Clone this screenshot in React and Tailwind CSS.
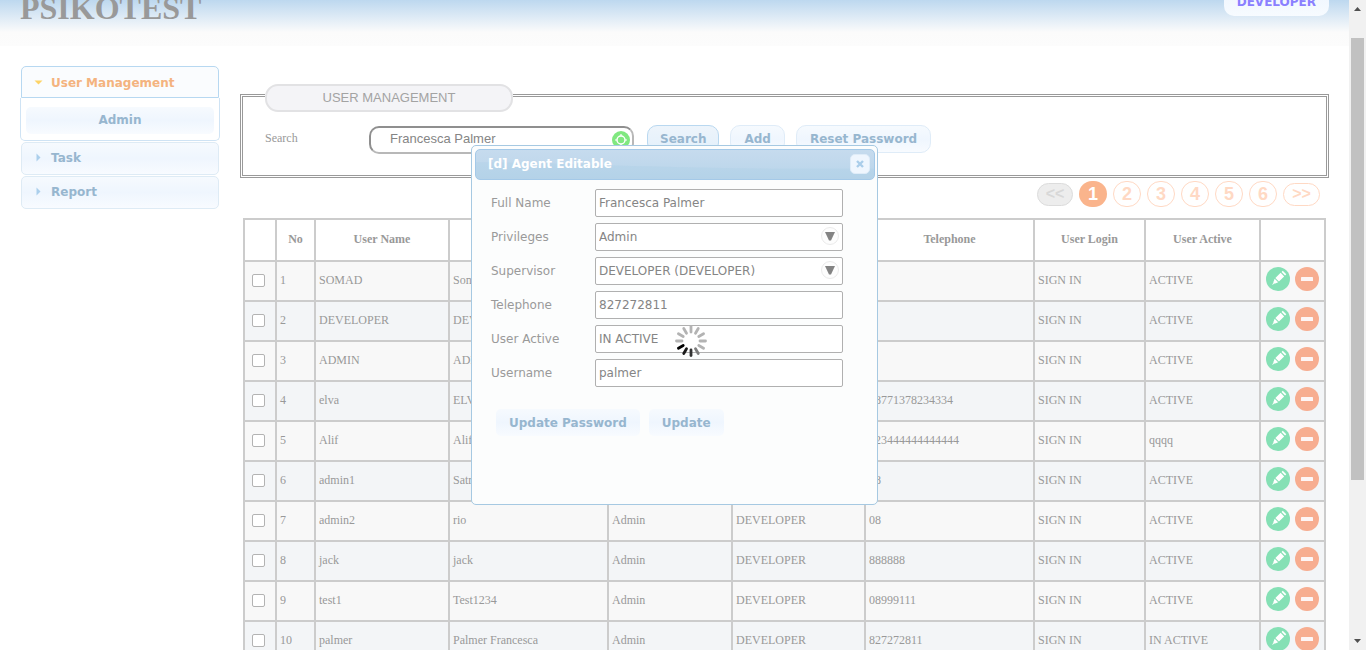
import React from "react";

const users = [
  { no: 1, user: "SOMAD", name: "Somad", phone: "", active: "ACTIVE" },
  { no: 2, user: "DEVELOPER", name: "DEVELOPER", phone: "", active: "ACTIVE" },
  { no: 3, user: "ADMIN", name: "ADMIN", phone: "", active: "ACTIVE" },
  { no: 4, user: "elva", name: "ELVA", phone: "08771378234334", active: "ACTIVE" },
  { no: 5, user: "Alif", name: "Alif", phone: "023444444444444", active: "qqqq" },
  { no: 6, user: "admin1", name: "Satrio", phone: "08", active: "ACTIVE" },
  { no: 7, user: "admin2", name: "rio", phone: "08", active: "ACTIVE" },
  { no: 8, user: "jack", name: "jack", phone: "888888", active: "ACTIVE" },
  { no: 9, user: "test1", name: "Test1234", phone: "08999111", active: "ACTIVE" },
  { no: 10, user: "palmer", name: "Palmer Francesca", phone: "827272811", active: "IN ACTIVE" },
];

const softFill = "bg-linear-to-b from-[#f6fafe] via-[#eff6fe] to-[#f8fbff]";
const uiBold = "font-['DejaVu_Sans',sans-serif] text-[12px] font-bold text-[#97b6cf]";

function EditIcon() {
  return (
    <svg viewBox="0 0 24 24" className="size-6" aria-hidden="true">
      <circle cx="12" cy="12" r="12" fill="#85e0b5" />
      <g transform="rotate(45 12 12)" fill="#fff">
        <rect x="9.5" y="2.8" width="5" height="1.7" />
        <rect x="9.5" y="5.8" width="5" height="7.4" />
        <path d="M9.500 14.200h5l-1.500 3.600h-2z" />
        <path d="M11.300 18h1.400l-.7 2.400z" />
      </g>
    </svg>
  );
}

function RemoveIcon() {
  return (
    <svg viewBox="0 0 24 24" className="size-6" aria-hidden="true">
      <circle cx="12" cy="12" r="12" fill="#f7ad90" />
      <rect x="6" y="10" width="12" height="4" rx="0.6" fill="#fdf6f6" />
    </svg>
  );
}

function TargetIcon() {
  return (
    <svg viewBox="0 0 18 18" className="size-[18px]" aria-hidden="true">
      <circle cx="9" cy="9" r="9" fill="#80e880" />
      <circle cx="9" cy="9" r="4" fill="none" stroke="#fff" strokeWidth="1.4" />
      <path d="M9 3v2M9 13v2M3 9h2M13 9h2" stroke="#fff" strokeWidth="1.2" />
    </svg>
  );
}

const spokes = [
  "#b3b3b3", "#b3b3b3", "#b3b3b3", "#b3b3b3", "#b3b3b3", "#7d7d7d",
  "#333333", "#1a1a1a", "#000000", "#b3b3b3", "#b3b3b3", "#b3b3b3",
];

function Spinner() {
  return (
    <svg viewBox="0 0 32 32" className="size-8" role="img" aria-label="Loading">
      {spokes.map((color, i) => (
        <line
          key={i}
          x1="16"
          y1="1.5"
          x2="16"
          y2="7"
          stroke={color}
          strokeWidth="2.8"
          strokeLinecap="round"
          transform={`rotate(${i * 30} 16 16)`}
        />
      ))}
    </svg>
  );
}

function Sidebar() {
  const item = `flex h-[33px] w-full items-center gap-[8px] rounded-[5px] border border-[#deebf5] pb-[2px] pl-[12px] ${softFill} ${uiBold}`;
  return (
    <nav className="w-[200px] shrink-0">
      <div className="px-px">
        <button className="flex h-8 w-full items-center gap-[8px] rounded-t-[5px] border border-[#b7d8f1] bg-[#fafcfe] pt-px pl-[12px] font-['DejaVu_Sans',sans-serif] text-[12px] font-bold text-[#f4b37f]">
          <svg viewBox="0 0 9 9" className="size-[9px]" aria-hidden="true">
            <path d="M0.5 2.5h8l-4 4z" fill="#fdd367" />
          </svg>
          User Management
        </button>
      </div>
      <div className="h-[43px] rounded-b-[5px] border border-t-0 border-[#cfe3f4] px-[5px] pt-2">
        <button className={`h-[27px] w-full rounded-[5px] ${softFill} ${uiBold}`}>Admin</button>
      </div>
      <div className="flex flex-col gap-px px-px pt-px">
        {["Task", "Report"].map((label) => (
          <button key={label} className={item}>
            <svg viewBox="0 0 9 9" className="size-[9px]" aria-hidden="true">
              <path d="M2.5 0.5v8l4-4z" fill="#abcfec" />
            </svg>
            {label}
          </button>
        ))}
      </div>
    </nav>
  );
}

function SearchPanel() {
  const button = `h-7 rounded-[10px] border ${uiBold}`;
  return (
    <fieldset className="h-[94px] min-w-0 border-[3px] border-double border-[#999999] pl-[22px]">
      <legend className="h-[22px] px-0">
        <div className="flex h-7 w-[248px] items-center justify-center rounded-[13px] border-2 border-[#e2e2e4] bg-[#f4f4f7] pb-px font-['Liberation_Sans',Arial,sans-serif] text-[13px] text-[#a3a3a3]">
          USER MANAGEMENT
        </div>
      </legend>
      <div className="flex items-center pt-[19px]">
        <label
          htmlFor="search"
          className="w-[104px] shrink-0 pb-[2px] font-['Liberation_Serif',serif] text-[12px] text-[#999999]"
        >
          Search
        </label>
        <div className="relative">
          <input
            id="search"
            defaultValue="Francesca Palmer"
            className="h-7 w-[265px] rounded-[10px] border-2 border-t-[#8f8f8f] border-r-[#b8b8b8] border-b-[#b8b8b8] border-l-[#8f8f8f] bg-white pb-[2px] pl-[19px] font-['Liberation_Sans',Arial,sans-serif] text-[13px] text-[#858585]"
          />
          <span className="absolute top-[6px] right-[4px]">
            <TargetIcon />
          </span>
        </div>
        <button className={`${button} ml-[13px] border-[#b9d8f0] bg-linear-to-b from-[#edf4fb] to-[#e3f0fb] px-3`}>
          Search
        </button>
        <button className={`${button} ml-[11px] border-[#dfecf8] px-[13px] ${softFill}`}>Add</button>
        <button className={`${button} ml-[11px] border-[#dfecf8] px-[13px] ${softFill}`}>Reset Password</button>
      </div>
    </fieldset>
  );
}

function Pager() {
  return (
    <div className="flex h-[26px] items-center justify-end gap-[6px] pr-[9px] font-['Liberation_Sans',Arial,sans-serif] font-bold">
      <button className="flex h-[23px] w-9 items-center justify-center rounded-full border border-[#dcdcdc] bg-[#ededed] text-[16px] text-[#d8d8d8]">
        {"<<"}
      </button>
      {[1, 2, 3, 4, 5, 6].map((page) => (
        <button
          key={page}
          className={
            page === 1
              ? "flex h-[26px] w-7 items-center justify-center rounded-full bg-[#fab48c] text-[18px] text-white"
              : "flex h-[26px] w-7 items-center justify-center rounded-full border border-[#ffd9c4] text-[18px] text-[#ffd9c4]"
          }
        >
          {page}
        </button>
      ))}
      <button className="flex h-[23px] w-[37px] items-center justify-center rounded-full border border-[#ffd9c4] text-[16px] text-[#ffd9c4]">
        {">>"}
      </button>
    </div>
  );
}

function UserTable() {
  const cell = "border-2 border-[#cccccc] pt-0 pr-0 pb-[2px] pl-[3px]";
  const head = "border-2 border-[#cccccc] px-0 pt-0 pb-[2px] font-bold";
  return (
    <table className="w-full table-fixed border-collapse border-2 border-[#c0c0c0] font-['Liberation_Serif',serif] text-[12px] text-[#999999]">
      <colgroup>
        <col className="w-[32px]" />
        <col className="w-[39px]" />
        <col className="w-[134px]" />
        <col className="w-[159px]" />
        <col className="w-[124px]" />
        <col className="w-[133px]" />
        <col className="w-[169px]" />
        <col className="w-[111px]" />
        <col className="w-[115px]" />
        <col className="w-[65px]" />
      </colgroup>
      <thead>
        <tr className="h-[42px]">
          <th className={head}></th>
          <th className={head}>No</th>
          <th className={head}>User Name</th>
          <th className={head}></th>
          <th className={head}></th>
          <th className={head}></th>
          <th className={head}>Telephone</th>
          <th className={head}>User Login</th>
          <th className={head}>User Active</th>
          <th className={head}></th>
        </tr>
      </thead>
      <tbody>
        {users.map((u) => (
          <tr key={u.no} className="h-10 odd:bg-[#f8f8f8] even:bg-[#f3f5f7]">
            <td className="border-2 border-[#cccccc] pt-0 pr-[3px] pb-[2px] pl-0">
              <input
                type="checkbox"
                aria-label={`Select ${u.user}`}
                className="mx-auto block size-[13px] appearance-none rounded-[2px] border border-[#b3b3b3] bg-white"
              />
            </td>
            <td className={cell}>{u.no}</td>
            <td className={cell}>{u.user}</td>
            <td className={cell}>{u.name}</td>
            <td className={cell}>Admin</td>
            <td className={cell}>DEVELOPER</td>
            <td className={cell}>{u.phone}</td>
            <td className={cell}>SIGN IN</td>
            <td className={cell}>{u.active}</td>
            <td className="border-2 border-[#cccccc] px-0 pt-0 pb-[5px]">
              <div className="flex justify-center gap-[5px]">
                <button aria-label={`Edit ${u.user}`}>
                  <EditIcon />
                </button>
                <button aria-label={`Remove ${u.user}`}>
                  <RemoveIcon />
                </button>
              </div>
            </td>
          </tr>
        ))}
      </tbody>
    </table>
  );
}

const fields = [
  { id: "full-name", label: "Full Name", value: "Francesca Palmer" },
  { id: "privileges", label: "Privileges", value: "Admin", select: true },
  { id: "supervisor", label: "Supervisor", value: "DEVELOPER (DEVELOPER)", select: true },
  { id: "telephone", label: "Telephone", value: "827272811" },
  { id: "user-active", label: "User Active", value: "IN ACTIVE" },
  { id: "username", label: "Username", value: "palmer" },
];

function Field({ id, label, value, select }) {
  const box =
    "h-7 w-full appearance-none rounded-[2px] border border-[#b0b0b0] bg-white px-[3px] text-[12px] text-[#858585]";
  return (
    <div className="flex items-center">
      <label htmlFor={id} className="w-[104px] shrink-0 text-[#9a9a9a]">
        {label}
      </label>
      <div className="relative w-[248px]">
        {select ? (
          <>
            <select id={id} className={box}>
              <option>{value}</option>
            </select>
            <svg
              viewBox="0 0 18 18"
              className="pointer-events-none absolute top-[4px] right-[4px] size-[18px]"
              aria-hidden="true"
            >
              <circle cx="9" cy="9" r="8.5" fill="#fdfdfd" stroke="#eaeaea" />
              <path d="M4 5h10l-4 8.500h-2z" fill="#838383" />
            </svg>
          </>
        ) : (
          <input id={id} defaultValue={value} className={box} />
        )}
      </div>
    </div>
  );
}

function AgentDialog() {
  const action = `h-[27px] rounded-[5px] px-[13px] ${softFill} ${uiBold}`;
  return (
    <div
      role="dialog"
      aria-label="Agent Editable"
      className="relative h-[360px] w-[407px] rounded-[5px] border border-[#a6c9e2] bg-[#fcfdfd] py-[3px] pr-[2px] pl-[3px] font-['DejaVu_Sans',sans-serif] text-[12px]"
    >
      <div className="relative flex h-[31px] items-center justify-between overflow-hidden rounded-[5px] border border-[#a4c9e8] bg-linear-to-b from-[#c6dbee] to-[#b9d5ea] pr-[4px] pb-px pl-[12px]">
        <svg
          viewBox="0 0 400 31"
          preserveAspectRatio="none"
          className="absolute inset-0 size-full"
          aria-hidden="true"
        >
          <path d="M0 13C90 13 190 21 400 20V31H0z" fill="#a9cde6" opacity="0.3" />
        </svg>
        <h2 className="relative pb-px font-bold text-white">[d] Agent Editable</h2>
        <button
          aria-label="Close"
          className="relative flex size-5 items-center justify-center rounded-[5px] border border-[#dfecf8] bg-[#eff6fe]"
        >
          <svg viewBox="0 0 8 8" className="size-2" aria-hidden="true">
            <path d="M1 1l6 6M7 1l-6 6" stroke="#aacdea" strokeWidth="2.4" />
          </svg>
        </button>
      </div>
      <form className="flex flex-col gap-[6px] pt-[9px] pl-4" onSubmit={(e) => e.preventDefault()}>
        {fields.map((f) => (
          <Field key={f.id} {...f} />
        ))}
        <div className="flex gap-[9px] pt-4 pl-[5px]">
          <button className={action}>Update Password</button>
          <button className={action}>Update</button>
        </div>
      </form>
      <div className="absolute top-[179px] left-[203px]">
        <Spinner />
      </div>
    </div>
  );
}

function ScrollTrack() {
  return (
    <div className="flex w-[17px] shrink-0 flex-col items-center bg-[#f1f1f1]" aria-hidden="true">
      <svg viewBox="0 0 17 17" className="size-[17px]">
        <path d="M5 11h7L8.500 7z" fill="#505050" />
      </svg>
      <div className="mt-[21px] h-[442px] w-[13px] bg-[#c1c1c1]" />
      <svg viewBox="0 0 17 17" className="mt-auto size-[17px]">
        <path d="M5 6h7L8.500 10z" fill="#505050" />
      </svg>
    </div>
  );
}

export default function App() {
  return (
    <div className="flex h-screen overflow-hidden bg-white">
      <div className="relative min-w-0 flex-1 overflow-hidden">
        <header className="flex h-[46px] items-start justify-between overflow-hidden bg-linear-to-b from-[#bdd8ef] via-[#fbfbfb] via-70% to-[#fcfcfc] pr-5 pl-5">
          <h1 className="-mt-2 font-['Liberation_Serif',serif] text-[32px] leading-8 font-bold text-[#999999]">
            PSIKOTEST
          </h1>
          <button className="-mt-3 h-7 rounded-[10px] bg-linear-to-b from-[#edf5fe] to-[#f7fbff] px-[13px] font-['DejaVu_Sans',sans-serif] text-[12px] font-bold text-[#8a80ff]">
            DEVELOPER
          </button>
        </header>
        <div className="flex gap-5 pt-5 pr-5 pl-5">
          <Sidebar />
          <main className="min-w-0 flex-1 pt-[18px]">
            <SearchPanel />
            <div className="pt-[3px]">
              <Pager />
            </div>
            <div className="pt-[11px] pr-[3px] pl-[3px]">
              <UserTable />
            </div>
          </main>
        </div>
        <div className="absolute inset-x-0 top-[145px] flex justify-center">
          <AgentDialog />
        </div>
      </div>
      <ScrollTrack />
    </div>
  );
}
